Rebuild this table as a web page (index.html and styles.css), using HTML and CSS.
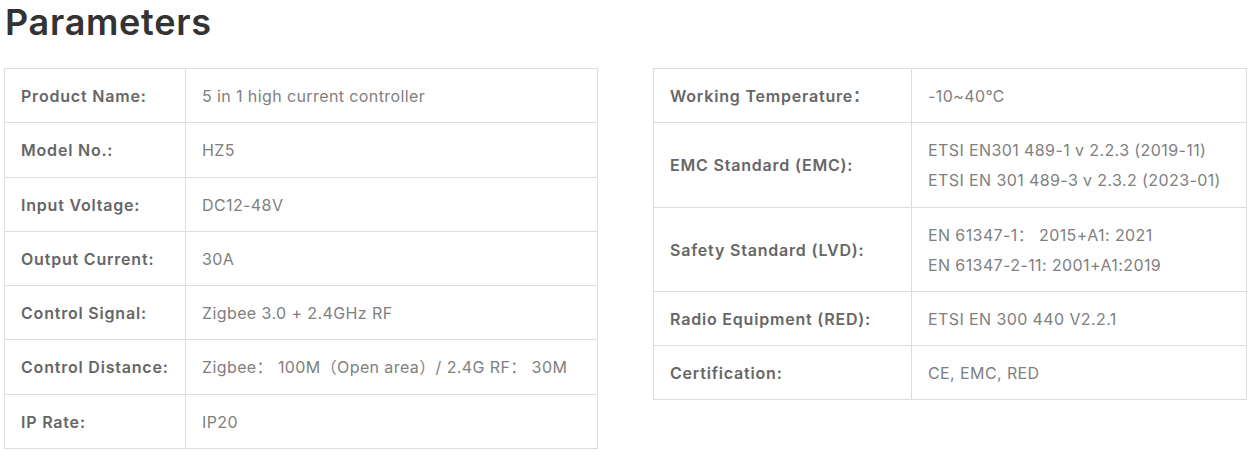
FILE: index.html
```html
<!DOCTYPE html>
<html>
<head>
<meta charset="utf-8">
<link rel="stylesheet" href="styles.css">
</head>
<body>
<h2 class="title">Parameters</h2>
<div class="tables">
  <table class="params params-left">
    <tr><th>Product Name:</th><td>5 in 1 high current controller</td></tr>
    <tr><th>Model No.:</th><td>HZ5</td></tr>
    <tr><th>Input Voltage:</th><td>DC12-48V</td></tr>
    <tr><th>Output Current:</th><td>30A</td></tr>
    <tr><th>Control Signal:</th><td>Zigbee 3.0 + 2.4GHz RF</td></tr>
    <tr><th>Control Distance:</th><td>Zigbee： 100M（Open area）/ 2.4G RF： 30M</td></tr>
    <tr><th>IP Rate:</th><td>IP20</td></tr>
  </table>
  <table class="params params-right">
    <tr><th>Working Temperature：</th><td>-10~40℃</td></tr>
    <tr><th>EMC Standard (EMC):</th><td>ETSI EN301 489-1 v 2.2.3 (2019-11)<br>ETSI EN 301 489-3 v 2.3.2 (2023-01)</td></tr>
    <tr><th>Safety Standard (LVD):</th><td>EN 61347-1： 2015+A1: 2021<br>EN 61347-2-11: 2001+A1:2019</td></tr>
    <tr><th>Radio Equipment (RED):</th><td>ETSI EN 300 440 V2.2.1</td></tr>
    <tr><th>Certification:</th><td>CE, EMC, RED</td></tr>
  </table>
</div>
</body>
</html>
```

FILE: styles.css
```css
html, body {
  margin: 0;
  padding: 0;
  background: #fff;
}
body {
  font-family: "Inter", "Noto Sans CJK SC", sans-serif;
  padding: 0 7px 0 4px;
}
.title {
  margin: 0;
  padding: 0 0 0 1px;
  height: 68px;
  box-sizing: border-box;
  font-size: 36px;
  font-weight: 600;
  letter-spacing: 0.7px;
  color: #333;
  line-height: 44px;
}
.tables {
  display: grid;
  grid-template-columns: 594px 594px;
  column-gap: 55px;
  align-items: start;
}
.params {
  width: 100%;
  border-collapse: collapse;
  font-size: 16px;
}
.params th, .params td {
  border: 1px solid #ddd;
  padding: 12px 16px 11.3px;
  line-height: 30px;
  text-align: left;
  vertical-align: middle;
}
.params th {
  font-weight: 600;
  color: #666;
  letter-spacing: 0.8px;
  white-space: nowrap;
}
.params td {
  font-weight: 400;
  color: #808080;
  letter-spacing: 0.4px;
  white-space: nowrap;
}
.params-left th { width: 148px; }
.params-right th { width: 225px; }
```
